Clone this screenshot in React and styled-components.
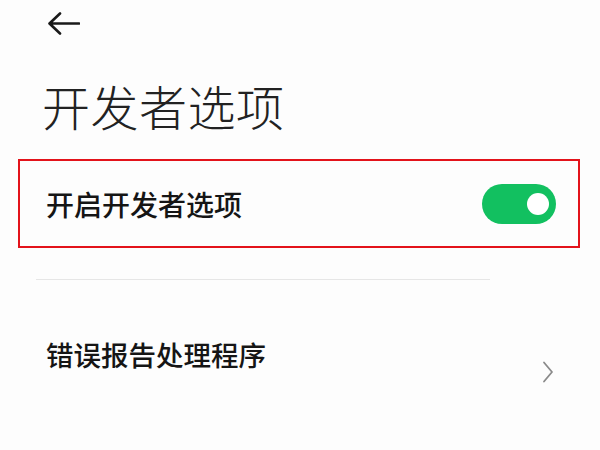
import styled, { createGlobalStyle } from 'styled-components';

const GlobalStyle = createGlobalStyle`
  html, body {
    margin: 0;
    padding: 0;
    background: #fdfdfd;
  }
  body {
    font-family: "Noto Sans CJK SC", "Noto Sans", sans-serif;
    color: #1c1c1c;
  }
`;

const Page = styled.div`
  width: 600px;
  height: 450px;
  overflow: hidden;
  background: #fdfdfd;
  display: flex;
  flex-direction: column;
`;

const TopBar = styled.div`
  height: 50px;
  padding-left: 46px;
  display: flex;
  align-items: center;
`;

const BackButton = styled.button`
  border: none;
  background: none;
  padding: 0;
  width: 38px;
  height: 30px;
  display: flex;
  align-items: center;
  margin-top: -2px;
`;

const Title = styled.h1`
  margin: 0;
  height: 108px;
  padding-left: 42px;
  font-size: 48px;
  font-weight: 300;
  line-height: 110px;
  letter-spacing: 0.5px;
  color: #222;
`;

const Highlight = styled.div`
  margin: 1px 20px 0 18px;
  height: 85px;
  border: 2px solid #e3131b;
  display: flex;
  align-items: center;
  justify-content: space-between;
  padding: 0 22px 0 26px;
`;

const RowLabel = styled.span`
  font-size: ${p => p.$size || 28}px;
  font-weight: 500;
  line-height: 1;
  color: #151515;
`;

const Switch = styled.div`
  width: 74px;
  height: 40px;
  border-radius: 20px;
  background: #12c060;
  display: flex;
  align-items: center;
  justify-content: flex-end;
  padding-right: 7px;
  box-sizing: border-box;
`;

const Knob = styled.span`
  width: 22px;
  height: 22px;
  border-radius: 50%;
  background: #fff;
`;

const Divider = styled.hr`
  margin: 31px 110px 0 36px;
  border: none;
  height: 1px;
  background: #e6e6e6;
`;

const Row = styled.div`
  height: 150px;
  display: flex;
  align-items: center;
  justify-content: space-between;
  padding: 0 46px 0 46px;
`;

const Chevron = styled.svg`
  width: 12px;
  height: 22px;
  margin-top: 34px;
`;

export default function App() {
  return (
    <>
      <GlobalStyle />
      <Page>
        <TopBar>
          <BackButton aria-label="back">
            <svg width="34" height="26" viewBox="0 0 34 26">
              <path d="M33 12.5H4.5M14 2.5L3.5 12.5L14 22.5" fill="none" stroke="#1a1a1a" strokeWidth="2.6" strokeLinecap="round" strokeLinejoin="round" />
            </svg>
          </BackButton>
        </TopBar>
        <Title>开发者选项</Title>
        <Highlight>
          <RowLabel>开启开发者选项</RowLabel>
          <Switch><Knob /></Switch>
        </Highlight>
        <Divider />
        <Row>
          <RowLabel $size={27.5}>错误报告处理程序</RowLabel>
          <Chevron viewBox="0 0 12 22">
            <path d="M2 1.5L10 11L2 20.5" fill="none" stroke="#8a8a8a" strokeWidth="1.8" strokeLinecap="round" strokeLinejoin="round" />
          </Chevron>
        </Row>
      </Page>
    </>
  );
}
